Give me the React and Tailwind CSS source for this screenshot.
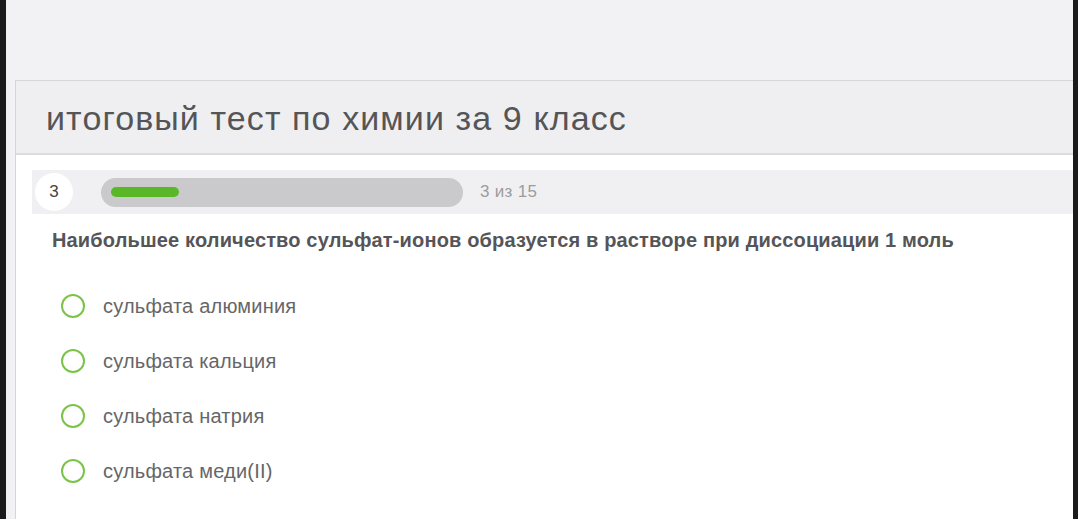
import React from "react";

const options = ["сульфата алюминия", "сульфата кальция", "сульфата натрия", "сульфата меди(II)"];

export default function App() {
  return (
    <div className="w-[1078px] h-[519px] overflow-hidden bg-[#1b1b1b] flex" style={{ fontFamily: '"Liberation Sans", Arial, sans-serif' }}>
      <div className="ml-[6px] w-[1067px] h-full bg-[#f2f2f4] flex flex-col">
        <div className="h-[80px] shrink-0" />
        <div className="ml-[9px] flex-1 border-l border-t border-[#d6d6d8] bg-white flex flex-col">
          <div className="h-[74px] bg-[#efeff1] border-b-2 border-[#dcdcde] flex items-center pl-[30px] pt-[2px]">
            <h1 className="text-[34px] text-[#555558] leading-none tracking-[1.1px]">итоговый тест по химии за 9 класс</h1>
          </div>
          <div className="mt-[15px] ml-[16px] h-[44px] bg-[#f0f0f2] flex items-center">
            <div className="ml-[3px] w-[38px] h-[38px] rounded-full bg-white flex items-center justify-center text-[17px] text-[#444]">3</div>
            <div className="ml-[28px] w-[362px] h-[29px] rounded-full bg-[#cacacc] flex items-center px-[10px]">
              <div className="w-[68px] h-[10px] rounded-full bg-[#5ab828]" />
            </div>
            <div className="ml-[17px] text-[17px] text-[#9c9c9e] tracking-[0.3px]">3 из 15</div>
          </div>
          <div className="mt-[14px] ml-[36px] text-[20px] leading-[24px] font-bold text-[#555558] tracking-[0.15px]">Наибольшее количество сульфат-ионов образуется в растворе при диссоциации 1 моль</div>
          <div className="mt-[42px] ml-[45px] flex flex-col gap-[31px]">
            {options.map((o) => (
              <div key={o} className="flex items-center h-[24px]">
                <div className="w-[24px] h-[24px] rounded-full border-[2.5px] border-[#7cc34a]" />
                <span className="ml-[18px] text-[20px] text-[#666668] tracking-[0.2px]">{o}</span>
              </div>
            ))}
          </div>
        </div>
      </div>
    </div>
  );
}
